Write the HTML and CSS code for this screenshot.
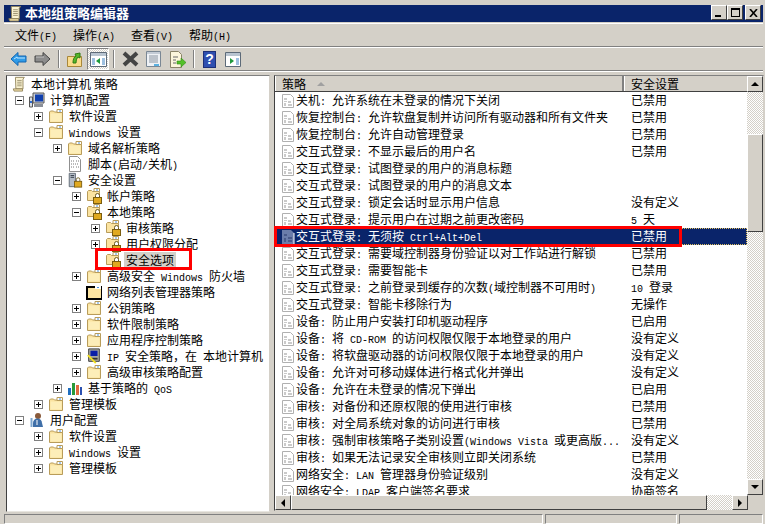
FILE: index.html

```html
<!DOCTYPE html>
<html lang="zh-CN">
<head>
  <meta charset="UTF-8" />
  <title>本地组策略编辑器</title>
  <link rel="stylesheet" href="styles.css">
</head>
<body>
  <svg class="defs">
    <symbol id="folder" viewBox="0 0 16 16">
      <path d="M1.500 14.500v-10.500l1-1h3l1 1h8v10.500z" fill="#fbe3a0" stroke="#b89c5a"/>
      <path d="M2.500 5.500h11v8h-11z" fill="#fdeeb9"/>
      <path d="M9 1.500h5.500v3h-5.500z" fill="#fff" stroke="#b89c5a"/>
      <path d="M11 2.500h2v1h-2z" fill="#4a90d9"/>
    </symbol>
    <symbol id="lockfolder" viewBox="0 0 16 16">
      <path d="M1.500 12.500v-9l1-1h3l1 1h7v9z" fill="#fbe3a0" stroke="#b89c5a"/>
      <path d="M8 .5h5.500v3h-5.500z" fill="#fff" stroke="#b89c5a"/>
      <path d="M10 1.500h2v1h-2z" fill="#4a90d9"/>
      <path d="M9.500 9.500v-2a2 2 0 0 1 4 0v2" fill="#fff" stroke="#6b5a20"/>
      <rect x="7.500" y="9.500" width="8" height="6" fill="#e0a920" stroke="#7a5d10"/>
    </symbol>
    <symbol id="netfolder" viewBox="0 0 16 16">
      <path d="M0 2h16v14h-16z" fill="#000"/>
      <path d="M2 4h13v10h-13z" fill="#fbe3a0"/>
      <path d="M9 2h6v3h-6z" fill="#fff"/>
      <path d="M11 3h2v1h-2z" fill="#4a90d9"/>
    </symbol>
    <symbol id="doc" viewBox="0 0 14 16">
      <path d="M1.500 1.500h8l3 3v10h-11z" fill="#fff" stroke="#b0b0b0"/>
      <path d="M3 5h3v2h-3zM3 8h3v1h-3zM3 10h2v3h-2zM7 8h3v2h-3zM7 11h4v2h-4z" fill="#cacaca"/>
    </symbol>
    <symbol id="docsel" viewBox="0 0 14 16">
      <path d="M1 1h9l3 3v11h-12z" fill="#6b7cab"/>
      <path d="M3 5h3v2h-3zM3 9h2v4h-2zM7 8h4v2h-4zM7 11h4v2h-4z" fill="#49598a"/>
      <path d="M13 4v12" stroke="#fff"/>
    </symbol>
    <symbol id="scroll" viewBox="0 0 16 18">
      <path d="M4 1.500h10l-1.500 2v11h-8z" fill="#fbf3d2" stroke="#8f8258"/>
      <path d="M1.500 14.500h10.500v2.500h-9.500z" fill="#f1dfa8" stroke="#8f8258"/>
      <path d="M6 5h5M6 7h5M6 9h5M6 11h5" stroke="#9a9070"/>
    </symbol>
    <symbol id="computer" viewBox="0 0 16 16">
      <path d="M4 1h11v10h-11z" fill="#c8ccd4" stroke="#555"/>
      <path d="M6 2.500h8v7h-8z" fill="#0f3fae"/>
      <path d="M0.500 5h3v10h-3z" fill="#d8dce2" stroke="#555"/>
      <path d="M5 12h9v3h-9z" fill="#8a8f98"/>
      <path d="M1 9h2v2h-2z" fill="#2a6ad0"/>
    </symbol>
    <symbol id="user" viewBox="0 0 16 16">
      <circle cx="9" cy="4" r="3" fill="#8a5a3a"/>
      <path d="M4 15v-4a4 4 0 0 1 9 0l1 4z" fill="#3f6fa8"/>
      <path d="M2.500 6v9" stroke="#7da7d0" stroke-width="2"/>
      <path d="M8 8v5" stroke="#fff"/>
    </symbol>
    <symbol id="script" viewBox="0 0 14 16">
      <path d="M1.500 .5h8l3 3v12h-11z" fill="#fff" stroke="#909090"/>
      <path d="M3 5h3M8 5h3M3 8h8M3 11h3M8 11h3" stroke="#777" stroke-dasharray="1 1"/>
    </symbol>
    <symbol id="secset" viewBox="0 0 16 18">
      <path d="M1.500 1.500h7v15h-7z" fill="#b4bcc6" stroke="#5a6470"/>
      <path d="M3 4h4M3 6h4" stroke="#2a3440"/>
      <path d="M9.500 10.500v-2a2 2 0 0 1 4 0v2" fill="#fff" stroke="#6b5a20"/>
      <rect x="7.500" y="10.500" width="8" height="6.500" fill="#e0a920" stroke="#7a5d10"/>
    </symbol>
    <symbol id="ipsec" viewBox="0 0 16 18">
      <path d="M2 1h12v14h-12z" fill="#a8a8a0" stroke="#333"/>
      <path d="M4 3h8v6h-8z" fill="#0a1ea8"/>
      <path d="M4 11h8v2h-8z" fill="#333"/>
      <path d="M1 8l9 9" stroke="#f4e020" stroke-width="2"/>
    </symbol>
    <symbol id="qos" viewBox="0 0 16 16">
      <path d="M1 8h3v7h-3z" fill="#1f6fc0"/>
      <path d="M5 3h3v12h-3z" fill="#2a9a3a"/>
      <path d="M9 5h3v10h-3z" fill="#e06a40"/>
      <path d="M13 7h2v8h-2z" fill="#2a4fb0"/>
    </symbol>
  </svg>

  <div class="window">
    <div class="titlebar">
      <svg class="title-icon"><use href="#scroll"/></svg>
      <span class="title-text">本地组策略编辑器</span>
      <div class="winbtns">
        <span class="winbtn"><i class="glyph-min"></i></span>
        <span class="winbtn"><i class="glyph-max"></i></span>
        <span class="winbtn close">
          <svg width="9" height="8" viewBox="0 0 9 8"><path d="M1 0l7 8M8 0l-7 8" stroke="#000" stroke-width="1.600" fill="none"/></svg>
        </span>
      </div>
    </div>

    <div class="menubar">
      <span class="menu">文件<span class="en">(F)</span></span>
      <span class="menu">操作<span class="en">(A)</span></span>
      <span class="menu">查看<span class="en">(V)</span></span>
      <span class="menu">帮助<span class="en">(H)</span></span>
    </div>

    <div class="toolbar">
      <svg class="tool" width="17" height="16" viewBox="0 0 17 16"><path d="M1 8l7-6.500v3.500h8v6h-8v3.500z" fill="#2f9be8" stroke="#1565b0"/><path d="M4 8l3-2v1h8" stroke="#bfe6ff" fill="none"/></svg>
      <svg class="tool ml7" width="17" height="16" viewBox="0 0 17 16"><path d="M16 8l-7-6.500v3.500h-8v6h8v3.500z" fill="#8c8c8c" stroke="#444"/><path d="M2 6h8" stroke="#c4c4c4"/></svg>
      <span class="sep ml7"></span>
      <svg class="tool ml7" width="15" height="16" viewBox="0 0 15 16"><path d="M.5 5.500h14v10h-14z" fill="#fbdc8c" stroke="#a8873a"/><path d="M6 12c0-4 1-6 3-7l-1-2 5-1v5l-2-1c-1 1-2 3-2 6z" fill="#55b82a" stroke="#2f7a12"/></svg>
      <span class="tool-on">
        <svg width="17" height="15" viewBox="0 0 17 15"><path d="M.5 .5h16v14h-16z" fill="#fff" stroke="#5d6a78"/><path d="M1 1h15v3h-15z" fill="#b8c4d0"/><path d="M2 6h3v7h-3zM12 6h3v7h-3z" fill="#9ec0e0"/><path d="M10 6v6l-4-3z" fill="#1f9a3c"/></svg>
      </span>
      <span class="sep ml4"></span>
      <svg class="tool ml7" width="17" height="16" viewBox="0 0 17 16"><path d="M2 2l13 12M15 2l-13 12" stroke="#444" stroke-width="4"/></svg>
      <svg class="tool ml7" width="15" height="16" viewBox="0 0 15 16"><path d="M.5 .5h14v15h-14z" fill="#eef1f5" stroke="#7a8794"/><path d="M1 1h13v2h-13z" fill="#c4ccd6"/><path d="M3 5h9M3 7h9M3 9h9M3 11h9" stroke="#8a94a0"/><path d="M8 13h5v2h-5z" fill="#5ab0e0"/></svg>
      <svg class="tool ml8" width="17" height="17" viewBox="0 0 17 17"><path d="M1.500 .5h8l3 3v13h-11z" fill="#fbf6dc" stroke="#8a8468"/><path d="M4 6h5M4 9h3M4 12h3" stroke="#666"/><path d="M8 10h4v-3l5 4.500-5 4.500v-3h-4z" fill="#53c02a" stroke="#2f8a12" stroke-width=".6"/></svg>
      <span class="sep ml7"></span>
      <span class="help ml8">?</span>
      <svg class="tool ml9" width="16" height="15" viewBox="0 0 16 15"><path d="M.5 .5h15v14h-15z" fill="#fff" stroke="#5d6a78"/><path d="M1 1h14v3h-14z" fill="#b8c4d0"/><path d="M11 6h3v7h-3z" fill="#9ec0e0"/><path d="M5 6v6l4-3z" fill="#1f9a3c"/></svg>
    </div>

    <div class="panes">
      <div class="tree">
        <div class="node root"><svg class="ico"><use href="#scroll"/></svg><span>本地计算机 策略</span></div>
        <div class="node l0"><i class="tog minus"></i><svg class="ico"><use href="#computer"/></svg><span>计算机配置</span></div>
        <div class="node l1"><i class="tog plus"></i><svg class="ico"><use href="#folder"/></svg><span>软件设置</span></div>
        <div class="node l1"><i class="tog minus"></i><svg class="ico"><use href="#folder"/></svg><span><span class="en">Windows </span>设置</span></div>
        <div class="node l2"><i class="tog plus"></i><svg class="ico"><use href="#folder"/></svg><span>域名解析策略</span></div>
        <div class="node l2"><i class="tog none"></i><svg class="ico"><use href="#script"/></svg><span>脚本<span class="en">(</span>启动<span class="en">/</span>关机<span class="en">)</span></span></div>
        <div class="node l2"><i class="tog minus"></i><svg class="ico"><use href="#secset"/></svg><span>安全设置</span></div>
        <div class="node l3"><i class="tog plus"></i><svg class="ico"><use href="#lockfolder"/></svg><span>帐户策略</span></div>
        <div class="node l3"><i class="tog minus"></i><svg class="ico"><use href="#lockfolder"/></svg><span>本地策略</span></div>
        <div class="node l4"><i class="tog plus"></i><svg class="ico"><use href="#lockfolder"/></svg><span>审核策略</span></div>
        <div class="node l4"><i class="tog plus"></i><svg class="ico"><use href="#lockfolder"/></svg><span>用户权限分配</span></div>
        <div class="node l4"><i class="tog none"></i><svg class="ico"><use href="#lockfolder"/></svg><span class="current">安全选项</span></div>
        <div class="node l3"><i class="tog plus"></i><svg class="ico"><use href="#folder"/></svg><span>高级安全<span class="en"> Windows </span>防火墙</span></div>
        <div class="node l3"><i class="tog none"></i><svg class="ico"><use href="#netfolder"/></svg><span>网络列表管理器策略</span></div>
        <div class="node l3"><i class="tog plus"></i><svg class="ico"><use href="#folder"/></svg><span>公钥策略</span></div>
        <div class="node l3"><i class="tog plus"></i><svg class="ico"><use href="#folder"/></svg><span>软件限制策略</span></div>
        <div class="node l3"><i class="tog plus"></i><svg class="ico"><use href="#folder"/></svg><span>应用程序控制策略</span></div>
        <div class="node l3"><i class="tog plus"></i><svg class="ico"><use href="#ipsec"/></svg><span><span class="en">IP </span>安全策略，在<span class="en"> </span>本地计算机</span></div>
        <div class="node l3"><i class="tog plus"></i><svg class="ico"><use href="#folder"/></svg><span>高级审核策略配置</span></div>
        <div class="node l2"><i class="tog plus"></i><svg class="ico"><use href="#qos"/></svg><span>基于策略的<span class="en"> QoS</span></span></div>
        <div class="node l1"><i class="tog plus"></i><svg class="ico"><use href="#folder"/></svg><span>管理模板</span></div>
        <div class="node l0"><i class="tog minus"></i><svg class="ico"><use href="#user"/></svg><span>用户配置</span></div>
        <div class="node l1"><i class="tog plus"></i><svg class="ico"><use href="#folder"/></svg><span>软件设置</span></div>
        <div class="node l1"><i class="tog plus"></i><svg class="ico"><use href="#folder"/></svg><span><span class="en">Windows </span>设置</span></div>
        <div class="node l1"><i class="tog plus"></i><svg class="ico"><use href="#folder"/></svg><span>管理模板</span></div>
        <div class="mark-tree"></div>
      </div>

      <div class="list">
        <div class="list-main">
          <div class="list-view">
            <div class="header">
              <div class="hcol name">策略<i class="sort"></i></div>
              <div class="hcol value">安全设置</div>
            </div>
            <div class="rows">
              <div class="row"><svg class="doc"><use href="#doc"/></svg><span class="name">关机<span class="en">: </span>允许系统在未登录的情况下关闭</span><span class="value">已禁用</span></div>
              <div class="row"><svg class="doc"><use href="#doc"/></svg><span class="name">恢复控制台<span class="en">: </span>允许软盘复制并访问所有驱动器和所有文件夹</span><span class="value">已禁用</span></div>
              <div class="row"><svg class="doc"><use href="#doc"/></svg><span class="name">恢复控制台<span class="en">: </span>允许自动管理登录</span><span class="value">已禁用</span></div>
              <div class="row"><svg class="doc"><use href="#doc"/></svg><span class="name">交互式登录<span class="en">: </span>不显示最后的用户名</span><span class="value">已禁用</span></div>
              <div class="row"><svg class="doc"><use href="#doc"/></svg><span class="name">交互式登录<span class="en">: </span>试图登录的用户的消息标题</span><span class="value"></span></div>
              <div class="row"><svg class="doc"><use href="#doc"/></svg><span class="name">交互式登录<span class="en">: </span>试图登录的用户的消息文本</span><span class="value"></span></div>
              <div class="row"><svg class="doc"><use href="#doc"/></svg><span class="name">交互式登录<span class="en">: </span>锁定会话时显示用户信息</span><span class="value">没有定义</span></div>
              <div class="row"><svg class="doc"><use href="#doc"/></svg><span class="name">交互式登录<span class="en">: </span>提示用户在过期之前更改密码</span><span class="value"><span class="en">5 </span>天</span></div>
              <div class="row selected"><svg class="doc"><use href="#docsel"/></svg><span class="name">交互式登录<span class="en">: </span>无须按<span class="en"> Ctrl+Alt+Del</span></span><span class="value">已禁用</span></div>
              <div class="row"><svg class="doc"><use href="#doc"/></svg><span class="name">交互式登录<span class="en">: </span>需要域控制器身份验证以对工作站进行解锁</span><span class="value">已禁用</span></div>
              <div class="row"><svg class="doc"><use href="#doc"/></svg><span class="name">交互式登录<span class="en">: </span>需要智能卡</span><span class="value">已禁用</span></div>
              <div class="row"><svg class="doc"><use href="#doc"/></svg><span class="name">交互式登录<span class="en">: </span>之前登录到缓存的次数<span class="en">(</span>域控制器不可用时<span class="en">)</span></span><span class="value"><span class="en">10 </span>登录</span></div>
              <div class="row"><svg class="doc"><use href="#doc"/></svg><span class="name">交互式登录<span class="en">: </span>智能卡移除行为</span><span class="value">无操作</span></div>
              <div class="row"><svg class="doc"><use href="#doc"/></svg><span class="name">设备<span class="en">: </span>防止用户安装打印机驱动程序</span><span class="value">已启用</span></div>
              <div class="row"><svg class="doc"><use href="#doc"/></svg><span class="name">设备<span class="en">: </span>将<span class="en"> CD-ROM </span>的访问权限仅限于本地登录的用户</span><span class="value">没有定义</span></div>
              <div class="row"><svg class="doc"><use href="#doc"/></svg><span class="name">设备<span class="en">: </span>将软盘驱动器的访问权限仅限于本地登录的用户</span><span class="value">没有定义</span></div>
              <div class="row"><svg class="doc"><use href="#doc"/></svg><span class="name">设备<span class="en">: </span>允许对可移动媒体进行格式化并弹出</span><span class="value">没有定义</span></div>
              <div class="row"><svg class="doc"><use href="#doc"/></svg><span class="name">设备<span class="en">: </span>允许在未登录的情况下弹出</span><span class="value">已启用</span></div>
              <div class="row"><svg class="doc"><use href="#doc"/></svg><span class="name">审核<span class="en">: </span>对备份和还原权限的使用进行审核</span><span class="value">已禁用</span></div>
              <div class="row"><svg class="doc"><use href="#doc"/></svg><span class="name">审核<span class="en">: </span>对全局系统对象的访问进行审核</span><span class="value">已禁用</span></div>
              <div class="row"><svg class="doc"><use href="#doc"/></svg><span class="name">审核<span class="en">: </span>强制审核策略子类别设置<span class="en">(Windows Vista </span>或更高版<span class="en">...</span></span><span class="value">没有定义</span></div>
              <div class="row"><svg class="doc"><use href="#doc"/></svg><span class="name">审核<span class="en">: </span>如果无法记录安全审核则立即关闭系统</span><span class="value">已禁用</span></div>
              <div class="row"><svg class="doc"><use href="#doc"/></svg><span class="name">网络安全<span class="en">: LAN </span>管理器身份验证级别</span><span class="value">没有定义</span></div>
              <div class="row"><svg class="doc"><use href="#doc"/></svg><span class="name">网络安全<span class="en">: LDAP </span>客户端签名要求</span><span class="value">协商签名</span></div>
            </div>
          </div>
          <div class="vscroll">
            <span class="sbtn"><i class="arrow up"></i></span>
            <span class="track t1"></span>
            <span class="thumb"></span>
            <span class="track fill"></span>
            <span class="sbtn"><i class="arrow down"></i></span>
          </div>
        </div>
        <div class="hscroll">
          <span class="sbtn"><i class="arrow left"></i></span>
          <span class="hthumb"></span>
          <span class="track t2"></span>
          <span class="sbtn"><i class="arrow right"></i></span>
          <span class="corner"></span>
        </div>
      </div>
      <div class="mark-row"></div>
    </div>

    <div class="statusbar">
      <span class="cell grow"></span>
      <span class="cell mid"></span>
      <span class="cell end"></span>
    </div>
  </div>
</body>
</html>
```

FILE: styles.css

```css
* {
  box-sizing: border-box;
}
html, body {
  margin: 0;
  padding: 0;
}
body {
  width: 765px;
  height: 524px;
  overflow: hidden;
  background: #d4d0c8;
  color: #000;
  font-family: "Noto Sans CJK SC", sans-serif;
  font-size: 12px;
}
.defs {
  display: block;
  width: 0;
  height: 0;
}
.en {
  font-family: "Liberation Mono", monospace;
  font-size: 10px;
  white-space: pre;
}
.window {
  display: flex;
  flex-direction: column;
  height: 524px;
  padding: 5px 2px 0 4px;
}

/* title bar */
.titlebar {
  display: flex;
  align-items: center;
  height: 17px;
  margin-bottom: 1px;
  padding: 0 2px 0 3px;
  background: #0a246a;
  color: #fff;
}
.title-icon {
  width: 16px;
  height: 17px;
}
.title-text {
  margin: 0 0 2px 2px;
  font-size: 13px;
  font-weight: 700;
}
.winbtns {
  display: flex;
  margin-left: auto;
  margin-bottom: 2px;
}
.winbtn {
  display: flex;
  align-items: center;
  justify-content: center;
  width: 16px;
  height: 15px;
  background: #d4d0c8;
  border: 1px solid;
  border-color: #fff #404040 #404040 #fff;
}
.winbtn.close {
  margin-left: 2px;
}
.glyph-min {
  width: 6px;
  height: 2px;
  margin-top: 6px;
  margin-right: 3px;
  background: #000;
}
.glyph-max {
  width: 9px;
  height: 9px;
  border: 1px solid #000;
  border-top-width: 2px;
}

/* menu and toolbar */
.menubar {
  display: flex;
  align-items: center;
  gap: 16px;
  height: 24px;
  padding: 0 0 2px 11px;
  border-top: 1px solid #fff;
  border-bottom: 1px solid #808080;
}
.menu {
  width: 42px;
  white-space: nowrap;
}
.toolbar {
  display: flex;
  align-items: center;
  height: 24px;
  padding-left: 6px;
  border-top: 1px solid #fff;
  border-bottom: 1px solid #808080;
}
.tool {
  flex: none;
}
.sep {
  width: 2px;
  height: 18px;
  border-left: 1px solid #808080;
  border-right: 1px solid #fff;
}
.ml4 { margin-left: 4px; }
.ml7 { margin-left: 7px; }
.ml8 { margin-left: 8px; }
.ml9 { margin-left: 9px; }
.tool-on {
  display: flex;
  align-items: center;
  justify-content: center;
  width: 22px;
  height: 22px;
  margin-left: 5px;
  border: 1px solid;
  border-color: #808080 #fff #fff #808080;
  background: repeating-conic-gradient(#d4d0c8 0 25%, #fff 0 50%) 0 0 / 2px 2px;
}
.help {
  width: 13px;
  height: 17px;
  background: #2f4fb0;
  border: 1px solid #1c2f78;
  color: #fff;
  font-family: "Liberation Sans", sans-serif;
  font-size: 14px;
  font-weight: 700;
  line-height: 15px;
  text-align: center;
}

/* panes */
.panes {
  position: relative;
  display: flex;
  gap: 4px;
  height: 441px;
  padding: 3px 0 0 2px;
  border-top: 1px solid #fff;
}
.tree {
  position: relative;
  flex: none;
  width: 264px;
  overflow: hidden;
  background: #fff;
  border: 1px solid;
  border-color: #808080 #d4d0c8 #e8e6e0 #404040;
}
.node {
  display: flex;
  align-items: center;
  height: 16px;
  white-space: pre;
}
.node > span {
  align-self: flex-start;
  line-height: 16px;
}
.root { padding-left: 4px; }
.root .ico { margin-right: 4px; }
.l0 { padding-left: 8px; }
.l1 { padding-left: 27px; }
.l2 { padding-left: 46px; }
.l3 { padding-left: 65px; }
.l4 { padding-left: 84px; }
.tog {
  flex: none;
  width: 9px;
  height: 9px;
  margin-right: 5px;
  border: 1px solid #808080;
  background: #fff;
}
.tog.minus {
  background: linear-gradient(#000, #000) center / 5px 1px no-repeat, #fff;
}
.tog.plus {
  background: linear-gradient(#000, #000) center / 5px 1px no-repeat,
    linear-gradient(#000, #000) center / 1px 5px no-repeat, #fff;
}
.tog.none {
  visibility: hidden;
}
.ico {
  flex: none;
  width: 16px;
  height: 16px;
  margin-right: 5px;
}
.node > .current {
  margin-left: -2px;
  padding: 0 2px;
  background: #d4d0c8;
}
.mark-tree {
  position: absolute;
  left: 88px;
  top: 172px;
  width: 97px;
  height: 22px;
  border: 3px solid #f00;
}

/* list */
.list {
  flex: none;
  display: flex;
  flex-direction: column;
  width: 490px;
  margin-bottom: 1px;
  border: 1px solid;
  border-color: #808080 #d4d0c8 #d4d0c8 #404040;
}
.list-main {
  flex: 1;
  display: flex;
  min-height: 0;
}
.list-view {
  flex: 1;
  min-width: 0;
  overflow: hidden;
  background: #fff;
}
.header {
  display: flex;
  height: 16px;
  background: #d4d0c8;
  border-bottom: 1px solid #404040;
  line-height: 15px;
}
.hcol {
  display: flex;
  align-items: center;
  border-left: 1px solid #fff;
  border-right: 2px solid #808080;
}
.hcol.name {
  width: 349px;
  padding-left: 6px;
}
.hcol.value {
  flex: 1;
  padding-left: 6px;
  border-right: 0;
}
.sort {
  width: 0;
  height: 0;
  margin-left: 11px;
  border-left: 4px solid transparent;
  border-right: 4px solid transparent;
  border-bottom: 4px solid #a0a0a0;
}
.row {
  display: flex;
  align-items: flex-start;
  height: 17px;
  line-height: 16px;
  white-space: pre;
}
.doc {
  flex: none;
  align-self: center;
  width: 14px;
  height: 16px;
  margin: 0 1px 0 6px;
}
.row .name {
  width: 328px;
}
.row .value {
  margin-left: 7px;
}
.row.selected {
  background: #0a246a;
  color: #fff;
  outline: 1px dotted #e0c060;
  outline-offset: -1px;
}
.mark-row {
  position: absolute;
  left: 270px;
  top: 154px;
  width: 408px;
  height: 21px;
  border: 3px solid #f00;
}

/* scrollbars */
.vscroll {
  display: flex;
  flex-direction: column;
  width: 16px;
}
.hscroll {
  display: flex;
  height: 15px;
}
.sbtn {
  flex: none;
  display: flex;
  align-items: center;
  justify-content: center;
  width: 16px;
  height: 16px;
  background: #d4d0c8;
  border: 1px solid;
  border-color: #fff #404040 #404040 #fff;
}
.hscroll .sbtn {
  height: 15px;
}
.track {
  background: repeating-conic-gradient(#d4d0c8 0 25%, #fff 0 50%) 0 0 / 2px 2px;
}
.track.t1 {
  height: 42px;
}
.track.fill {
  flex: 1;
}
.track.t2 {
  width: 25px;
}
.thumb {
  height: 98px;
  background: #d4d0c8;
  border: 1px solid;
  border-color: #fff #404040 #404040 #fff;
}
.hthumb {
  width: 416px;
  background: #d4d0c8;
  border: 1px solid;
  border-color: #fff #404040 #404040 #fff;
}
.corner {
  flex: 1;
}
.arrow {
  width: 0;
  height: 0;
  border: 4px solid transparent;
}
.arrow.up {
  border-top: 0;
  border-bottom-color: #000;
}
.arrow.down {
  border-bottom: 0;
  border-top-color: #000;
}
.arrow.left {
  border-left: 0;
  border-right-color: #000;
}
.arrow.right {
  border-right: 0;
  border-left-color: #000;
}

/* status bar */
.statusbar {
  flex: 1;
  display: flex;
  gap: 2px;
  padding-top: 2px;
}
.cell {
  border: 1px solid;
  border-color: #808080 #fff #fff #808080;
}
.cell.grow {
  flex: 1;
}
.cell.mid {
  width: 132px;
}
.cell.end {
  width: 84px;
}
```
